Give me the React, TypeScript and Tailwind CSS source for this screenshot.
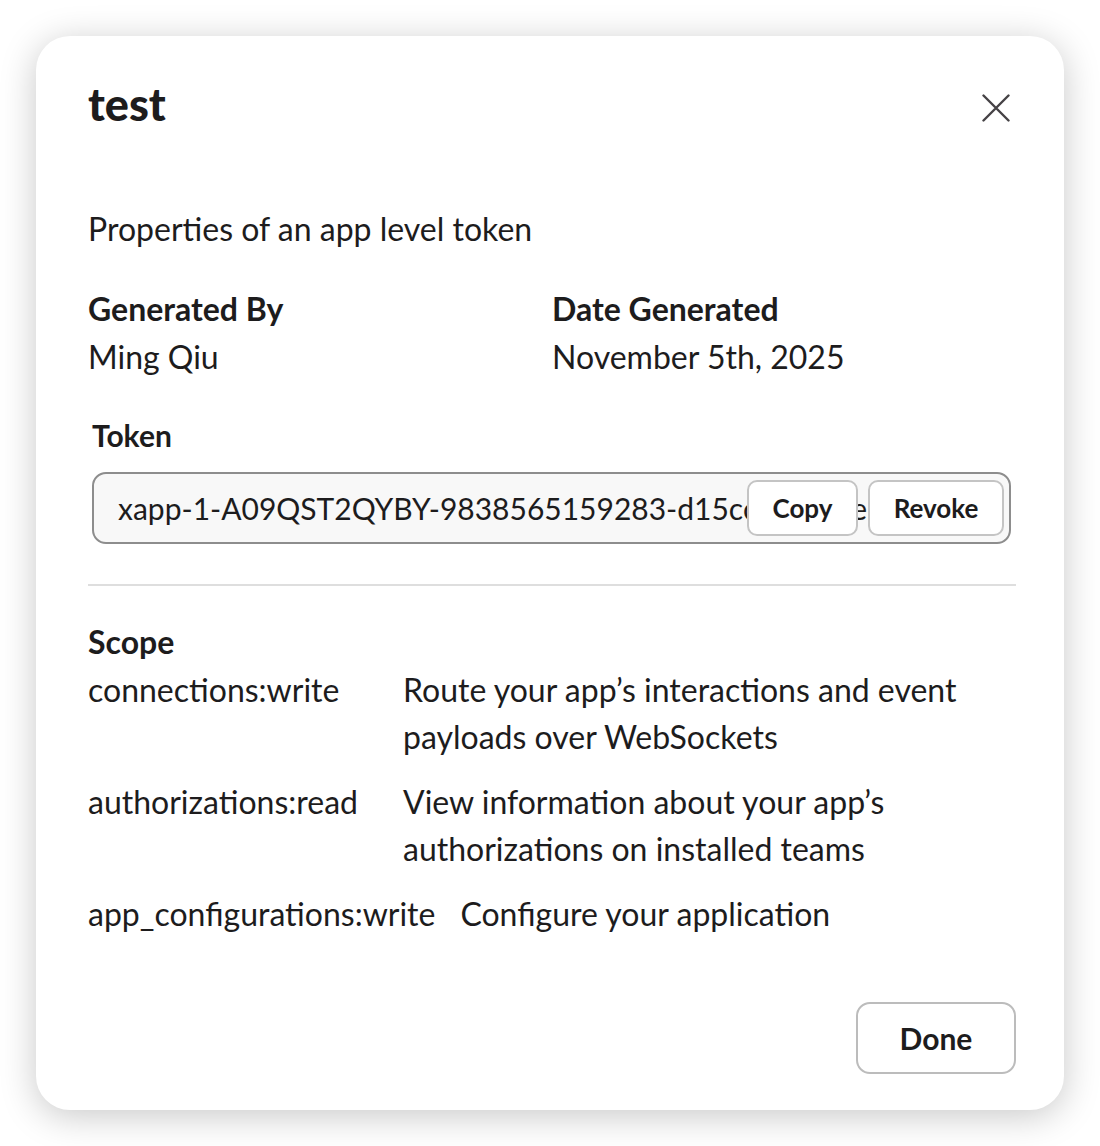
const scopes = [
  { name: 'connections:write', desc: 'Route your app’s interactions and event payloads over WebSockets' },
  { name: 'authorizations:read', desc: 'View information about your app’s authorizations on installed teams' },
  { name: 'app_configurations:write', desc: 'Configure your application' },
];

export default function App() {
  return (
    <div className="min-h-[1146px] bg-white p-9 font-['Lato',sans-serif] text-[#1d1c1d]">
      <div className="h-[1074px] w-[1028px] rounded-[34px] bg-white shadow-[0_6px_36px_rgba(0,0,0,0.22)] flex flex-col">
        <div className="flex items-start justify-between pl-[52px] pr-[54px] pt-[42px]">
          <h1 className="text-[45px] font-black leading-[52px]">test</h1>
          <button className="mt-[16px] text-[#454245]" aria-label="Close">
            <svg width="28" height="28" viewBox="0 0 28 28" fill="none" stroke="currentColor" strokeWidth="2.4" strokeLinecap="round">
              <path d="M1.5 1.5 L26.5 26.5 M26.5 1.5 L1.5 26.5" />
            </svg>
          </button>
        </div>

        <div className="flex-1 px-[48px] pl-[52px] pt-[75px]">
          <p className="text-[32px] leading-[48px]">Properties of an app level token</p>

          <div className="mt-[32px] grid grid-cols-[464px_1fr]">
            <div>
              <div className="text-[32px] font-bold leading-[48px]">Generated By</div>
              <div className="text-[32px] leading-[48px]">Ming Qiu</div>
            </div>
            <div>
              <div className="text-[32px] font-bold leading-[48px]">Date Generated</div>
              <div className="text-[32px] leading-[48px]">November 5th, 2025</div>
            </div>
          </div>

          <div className="mt-[36px] pl-1 pr-[5px]">
            <div className="text-[30px] font-bold leading-[36px]">Token</div>
            <div className="relative mt-[19px] h-[72px] overflow-hidden rounded-[14px] border-2 border-[#8d8d8d] bg-[#f8f8f8]">
              <div className="whitespace-nowrap pl-[24px] text-[30px] leading-[68px] text-[#1d1c1d]">
                xapp-1-A09QST2QYBY-9838565159283-d15cc<span className="inline-block w-[94px]" />e
              </div>
              <div className="absolute right-[5px] top-[6px] flex gap-[10px]">
                <button className="h-[56px] w-[111px] rounded-[10px] border-2 border-[#c4c4c4] bg-white text-[26px] font-bold">
                  Copy
                </button>
                <button className="h-[56px] w-[136px] rounded-[10px] border-2 border-[#c4c4c4] bg-white text-[26px] font-bold">
                  Revoke
                </button>
              </div>
            </div>
          </div>

          <div className="mt-[40px] h-[2px] bg-[#dedede]" />

          <div className="mt-[32px] text-[32px] font-bold leading-[48px]">Scope</div>
          <div className="flex flex-col gap-[18px]">
            {scopes.map((s) => (
              <div key={s.name} className="flex gap-[25px] text-[32px] leading-[47px]">
                <div className="min-w-[290px] whitespace-nowrap">{s.name}</div>
                <div className="flex-1">{s.desc}</div>
              </div>
            ))}
          </div>
        </div>

        <div className="flex justify-end px-[48px] pb-[36px]">
          <button className="h-[72px] w-[160px] rounded-[14px] border-2 border-[#bcbcbc] bg-white text-[30px] font-bold">
            Done
          </button>
        </div>
      </div>
    </div>
  );
}
